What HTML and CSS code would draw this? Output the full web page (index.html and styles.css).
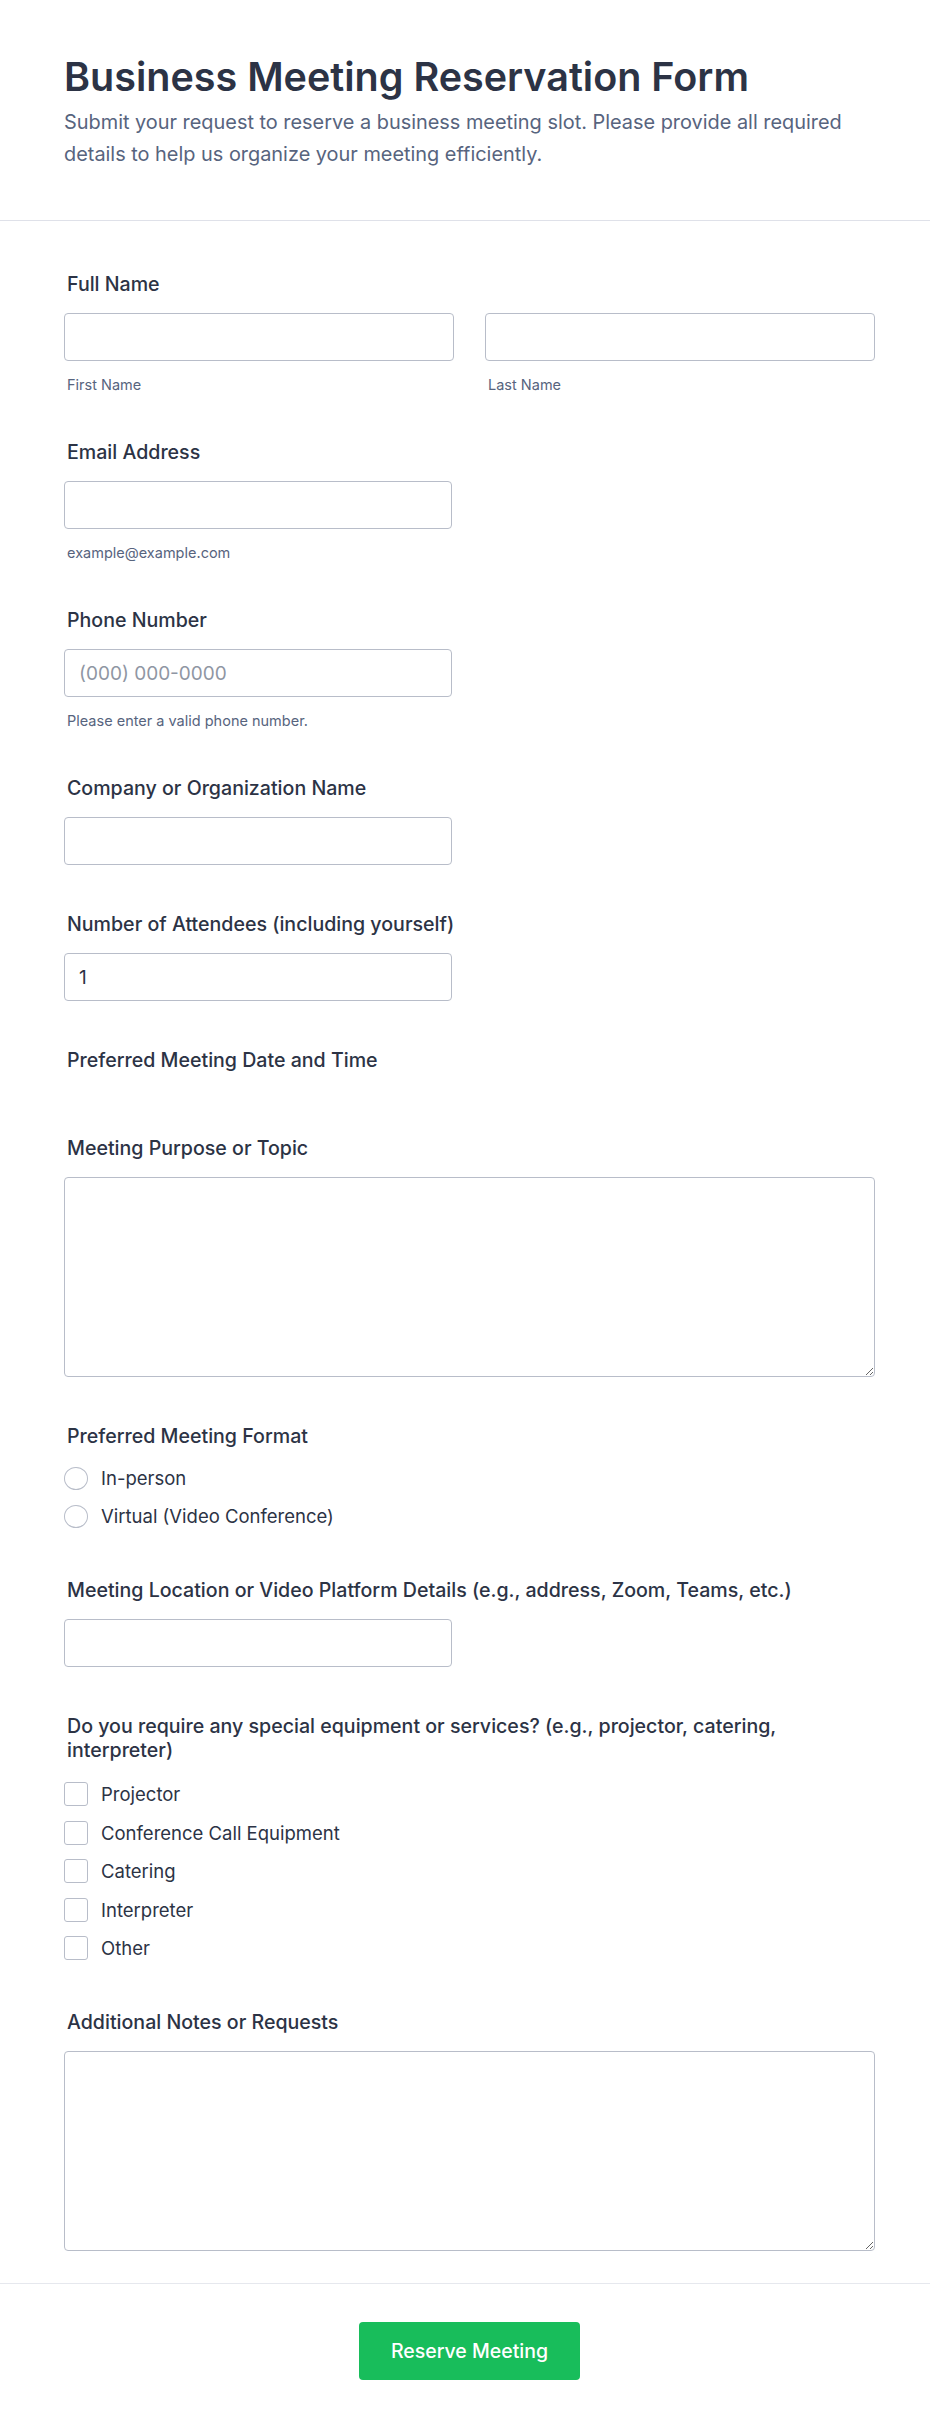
FILE: index.html
```html
<!DOCTYPE html>
<html lang="en">
<head>
<meta charset="utf-8">
<title>Business Meeting Reservation Form</title>
<link rel="stylesheet" href="styles.css">
</head>
<body>
<header class="form-header">
  <h1 class="form-title">Business Meeting Reservation Form</h1>
  <p class="form-subtitle">Submit your request to reserve a business meeting slot. Please provide all required details to help us organize your meeting efficiently.</p>
</header>

<main class="form-list">
  <div class="field">
    <label class="field-label">Full Name</label>
    <div class="name-row">
      <div class="name-col">
        <input class="text-input full" type="text">
        <span class="sublabel">First Name</span>
      </div>
      <div class="name-col">
        <input class="text-input full" type="text">
        <span class="sublabel">Last Name</span>
      </div>
    </div>
  </div>

  <div class="field">
    <label class="field-label">Email Address</label>
    <input class="text-input" type="email">
    <span class="sublabel">example@example.com</span>
  </div>

  <div class="field">
    <label class="field-label">Phone Number</label>
    <input class="text-input" type="tel" placeholder="(000) 000-0000">
    <span class="sublabel">Please enter a valid phone number.</span>
  </div>

  <div class="field">
    <label class="field-label">Company or Organization Name</label>
    <input class="text-input" type="text">
  </div>

  <div class="field">
    <label class="field-label">Number of Attendees (including yourself)</label>
    <input class="text-input" type="text" value="1">
  </div>

  <div class="field">
    <label class="field-label">Preferred Meeting Date and Time</label>
    <div class="empty-slot"></div>
  </div>

  <div class="field">
    <label class="field-label">Meeting Purpose or Topic</label>
    <textarea class="text-area"></textarea>
  </div>

  <div class="field">
    <label class="field-label">Preferred Meeting Format</label>
    <div class="options radios">
      <label class="option"><input class="radio" type="radio" name="format"><span>In-person</span></label>
      <label class="option"><input class="radio" type="radio" name="format"><span>Virtual (Video Conference)</span></label>
    </div>
  </div>

  <div class="field">
    <label class="field-label">Meeting Location or Video Platform Details (e.g., address, Zoom, Teams, etc.)</label>
    <input class="text-input" type="text">
  </div>

  <div class="field">
    <label class="field-label narrow">Do you require any special equipment or services? (e.g., projector, catering, interpreter)</label>
    <div class="options checks">
      <label class="option"><input class="check" type="checkbox"><span>Projector</span></label>
      <label class="option"><input class="check" type="checkbox"><span>Conference Call Equipment</span></label>
      <label class="option"><input class="check" type="checkbox"><span>Catering</span></label>
      <label class="option"><input class="check" type="checkbox"><span>Interpreter</span></label>
      <label class="option"><input class="check" type="checkbox"><span>Other</span></label>
    </div>
  </div>

  <div class="field">
    <label class="field-label">Additional Notes or Requests</label>
    <textarea class="text-area"></textarea>
  </div>
</main>

<footer class="form-footer">
  <button class="submit-btn" type="button">Reserve Meeting</button>
</footer>
</body>
</html>
```

FILE: styles.css
```css
* {
  box-sizing: border-box;
}

body {
  margin: 0;
  background: #ffffff;
  color: #2c3345;
  font-family: Inter, "Noto Sans", "Liberation Sans", sans-serif;
}

.form-header {
  padding: 55px 55px 50px 64px;
  border-bottom: 1px solid #dfe1e9;
}

.form-title {
  margin: 0;
  font-size: 39.5px;
  font-weight: 600;
  line-height: 44px;
  color: #2c3345;
}

.form-subtitle {
  margin: 7px 0 0;
  font-size: 19.9px;
  line-height: 32px;
  color: #57647e;
}

.form-list {
  padding: 28px 55px 8px 64px;
}

.field {
  padding: 23px 0 24px;
}

.field-label {
  display: block;
  margin-bottom: 17px;
  padding-left: 3px;
  font-size: 19.6px;
  font-weight: 500;
  line-height: 24px;
  color: #2c3345;
}

.field-label.narrow {
  max-width: 763px;
}

.name-row {
  display: grid;
  grid-template-columns: 390px 390px;
  column-gap: 31px;
}

.name-col {
  display: flex;
  flex-direction: column;
}

.text-input {
  display: block;
  width: 388px;
  height: 48px;
  padding: 0 14px;
  border: 1px solid #b8bdc9;
  border-radius: 4px;
  background: #ffffff;
  font-family: inherit;
  font-size: 19px;
  color: #2c3345;
  outline: none;
}

.text-input.full {
  width: 100%;
}

.text-input::placeholder {
  color: #8f96a3;
}

.sublabel {
  display: block;
  margin-top: 15px;
  padding-left: 3px;
  font-size: 14.5px;
  line-height: 17px;
  color: #57647e;
}

.empty-slot {
  height: 15px;
  margin-top: -17px;
  padding-top: 17px;
}

.text-area {
  display: block;
  width: 100%;
  height: 200px;
  padding: 10px 14px;
  border: 1px solid #b8bdc9;
  border-radius: 4px;
  background: #ffffff;
  font-family: inherit;
  font-size: 19px;
  color: #2c3345;
  outline: none;
}

.options {
  display: flex;
  flex-direction: column;
  gap: 8px;
}

.options.radios {
  margin-top: -2px;
}

.options.checks {
  gap: 8.5px;
}

.option {
  display: flex;
  align-items: center;
  gap: 13px;
  height: 30px;
  font-size: 18.5px;
  color: #2c3345;
}

.radio {
  appearance: none;
  -webkit-appearance: none;
  width: 24px;
  height: 23px;
  margin: 0;
  border: 1px solid #b8bdc9;
  border-radius: 50%;
  background: #ffffff;
}

.check {
  appearance: none;
  -webkit-appearance: none;
  width: 24px;
  height: 24px;
  margin: 0;
  border: 1px solid #b8bdc9;
  border-radius: 3px;
  background: #ffffff;
}

.form-footer {
  padding: 38px 55px 50px 64px;
  border-top: 1px solid #e6e8ee;
  text-align: center;
}

.submit-btn {
  height: 58px;
  padding: 0 32px;
  border: none;
  border-radius: 4px;
  background: #18bd5b;
  color: #ffffff;
  font-family: inherit;
  font-size: 19.5px;
  font-weight: 500;
}
```
